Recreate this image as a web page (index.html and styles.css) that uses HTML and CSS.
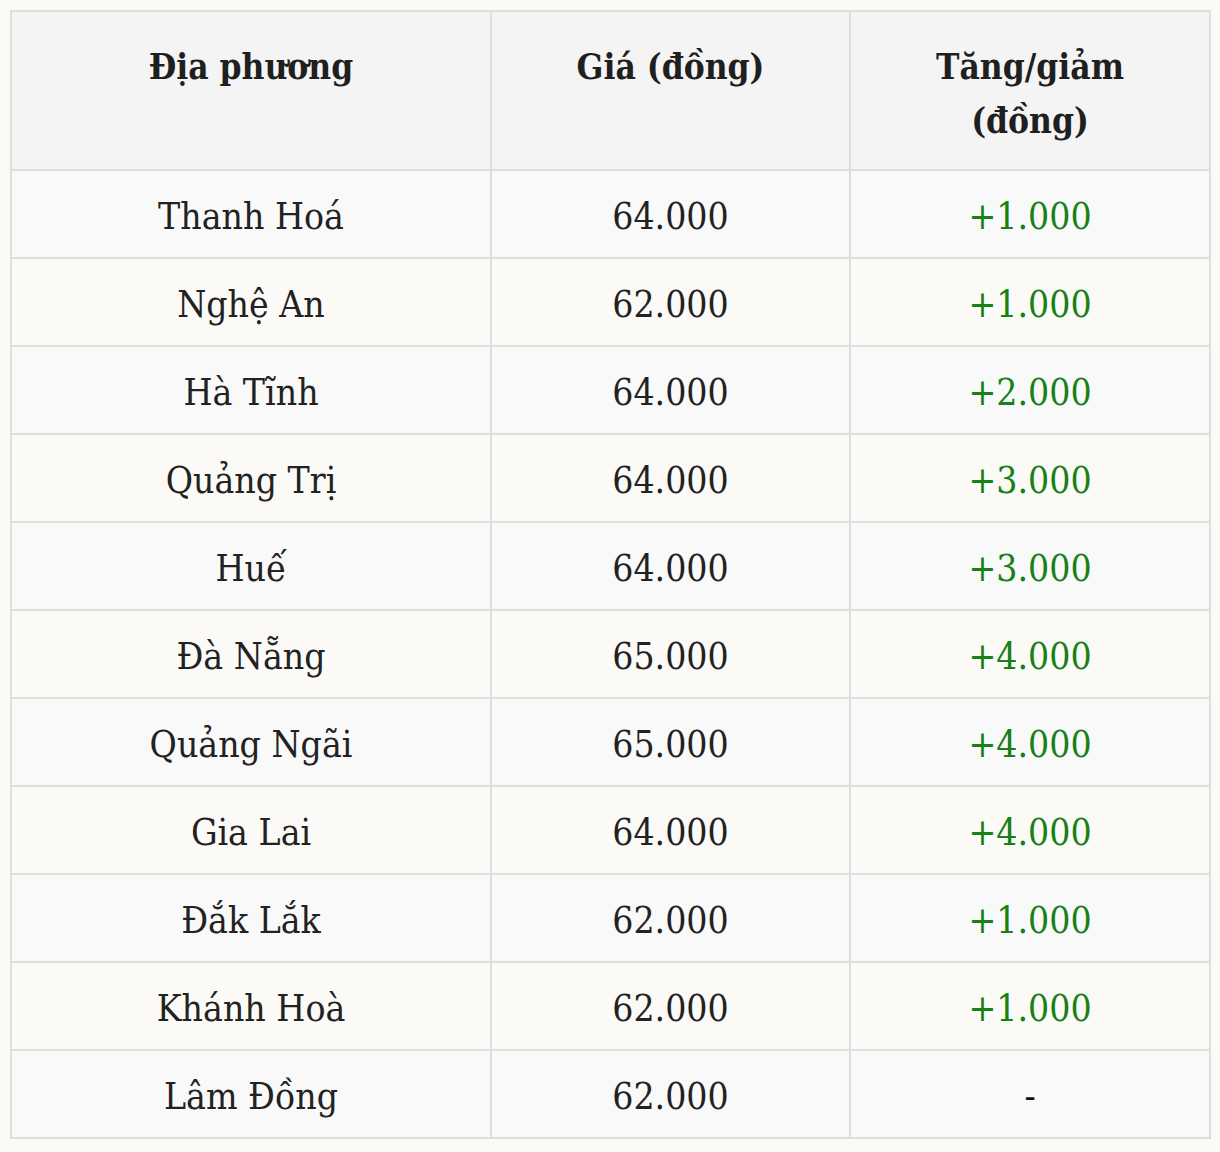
FILE: index.html
```html
<!DOCTYPE html>
<html lang="vi">
<head>
<meta charset="utf-8">
<title>Giá</title>
<link rel="stylesheet" href="styles.css">
</head>
<body>
<table class="price-table">
  <colgroup>
    <col class="col-place">
    <col class="col-price">
    <col class="col-change">
  </colgroup>
  <thead>
    <tr>
      <th>Địa phương</th>
      <th>Giá (đồng)</th>
      <th>Tăng/giảm<br>(đồng)</th>
    </tr>
  </thead>
  <tbody>
    <tr><td>Thanh Hoá</td><td>64.000</td><td class="up">+1.000</td></tr>
    <tr><td>Nghệ An</td><td>62.000</td><td class="up">+1.000</td></tr>
    <tr><td>Hà Tĩnh</td><td>64.000</td><td class="up">+2.000</td></tr>
    <tr><td>Quảng Trị</td><td>64.000</td><td class="up">+3.000</td></tr>
    <tr><td>Huế</td><td>64.000</td><td class="up">+3.000</td></tr>
    <tr><td>Đà Nẵng</td><td>65.000</td><td class="up">+4.000</td></tr>
    <tr><td>Quảng Ngãi</td><td>65.000</td><td class="up">+4.000</td></tr>
    <tr><td>Gia Lai</td><td>64.000</td><td class="up">+4.000</td></tr>
    <tr><td>Đắk Lắk</td><td>62.000</td><td class="up">+1.000</td></tr>
    <tr><td>Khánh Hoà</td><td>62.000</td><td class="up">+1.000</td></tr>
    <tr><td>Lâm Đồng</td><td>62.000</td><td class="flat">-</td></tr>
  </tbody>
</table>
</body>
</html>
```

FILE: styles.css
```css
html, body {
  margin: 0;
  padding: 0;
  background: #fbfaf7;
}

body {
  padding: 10px;
  font-family: "DejaVu Serif", "Liberation Serif", serif;
  font-stretch: condensed;
  color: #222222;
}

.price-table {
  width: 1199px;
  border-collapse: collapse;
  table-layout: fixed;
  border: 2px solid #dedede;
}

.col-place { width: 480px; }
.col-price { width: 359px; }
.col-change { width: 360px; }

.price-table th,
.price-table td {
  border: 2px solid #dedede;
  text-align: center;
  line-height: 54px;
}

.price-table th {
  background: #f4f4f4;
  font-weight: bold;
  font-size: 35px;
  vertical-align: top;
  padding: 28px 6px 21px;
  color: #1f1f1f;
}

.price-table td {
  font-size: 37px;
  padding: 19px 6px 13px;
  vertical-align: middle;
}

.price-table tbody tr:nth-child(odd) td {
  background: #f9f9f9;
}

.price-table tbody tr:nth-child(even) td {
  background: #fbfaf6;
}

.price-table td.up {
  color: #178017;
}

.price-table td.flat {
  color: #111111;
}
```
